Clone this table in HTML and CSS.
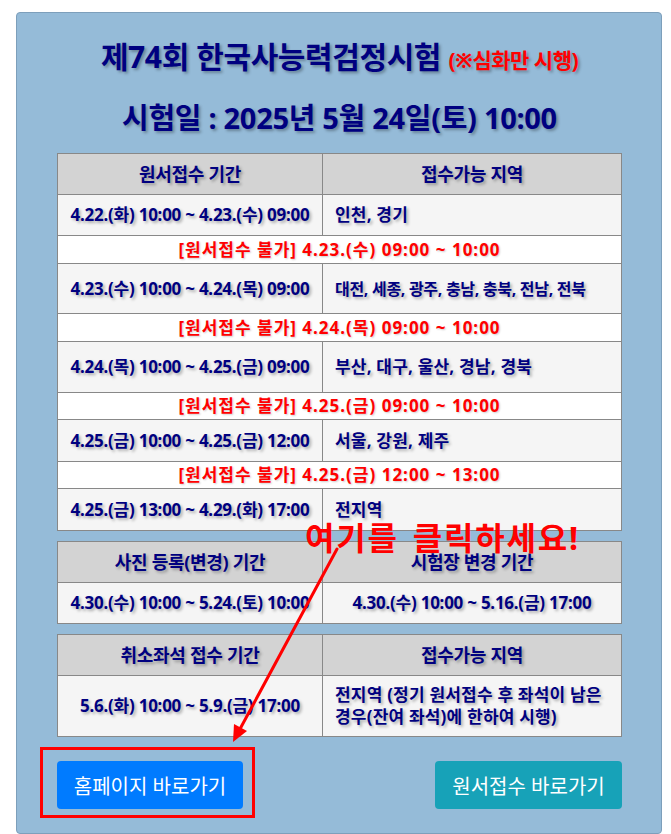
FILE: index.html
```html
<!DOCTYPE html>
<html lang="ko">
<head>
<meta charset="utf-8">
<title>제74회 한국사능력검정시험</title>
<link rel="stylesheet" href="styles.css">
</head>
<body>
<div class="panel">
  <h1 class="title">제74회 한국사능력검정시험 <span class="note">(※심화만 시행)</span></h1>
  <h2 class="exam-date">시험일 : 2025년 5월 24일(토) 10:00</h2>

  <div class="sheet">
    <div class="cell head">원서접수 기간</div>
    <div class="cell head">접수가능 지역</div>

    <div class="cell period r41">4.22.(화) 10:00 ~ 4.23.(수) 09:00</div>
    <div class="cell region r41">인천, 경기</div>
    <div class="cell closed c28">[원서접수 불가] 4.23.(수) 09:00 ~ 10:00</div>

    <div class="cell period r50">4.23.(수) 10:00 ~ 4.24.(목) 09:00</div>
    <div class="cell region small r50">대전, 세종, 광주, 충남, 충북, 전남, 전북</div>
    <div class="cell closed c28">[원서접수 불가] 4.24.(목) 09:00 ~ 10:00</div>

    <div class="cell period r51">4.24.(목) 10:00 ~ 4.25.(금) 09:00</div>
    <div class="cell region r51">부산, 대구, 울산, 경남, 경북</div>
    <div class="cell closed c27">[원서접수 불가] 4.25.(금) 09:00 ~ 10:00</div>

    <div class="cell period r42">4.25.(금) 10:00 ~ 4.25.(금) 12:00</div>
    <div class="cell region r42">서울, 강원, 제주</div>
    <div class="cell closed c27">[원서접수 불가] 4.25.(금) 12:00 ~ 13:00</div>

    <div class="cell period r42">4.25.(금) 13:00 ~ 4.29.(화) 17:00</div>
    <div class="cell region r42">전지역</div>
  </div>

  <div class="sheet gap">
    <div class="cell head">사진 등록(변경) 기간</div>
    <div class="cell head">시험장 변경 기간</div>
    <div class="cell period r41">4.30.(수) 10:00 ~ 5.24.(토) 10:00</div>
    <div class="cell period r41">4.30.(수) 10:00 ~ 5.16.(금) 17:00</div>
  </div>

  <div class="sheet gap">
    <div class="cell head">취소좌석 접수 기간</div>
    <div class="cell head">접수가능 지역</div>
    <div class="cell period r61">5.6.(화) 10:00 ~ 5.9.(금) 17:00</div>
    <div class="cell region r61 wrap">전지역 (정기 원서접수 후 좌석이 남은 경우(잔여 좌석)에 한하여 시행)</div>
  </div>

  <div class="actions">
    <div class="btn-wrap">
      <a class="btn btn-home" href="#">홈페이지 바로가기</a>
      <span class="highlight"></span>
    </div>
    <a class="btn btn-apply" href="#">원서접수 바로가기</a>
  </div>

  <div class="callout">여기를 클릭하세요!</div>
  <svg class="arrow" width="644" height="821" viewBox="0 0 644 821">
    <line x1="320" y1="536" x2="223" y2="716" stroke="#ff0000" stroke-width="3" stroke-linecap="round"/>
    <polygon points="216,729 230,718 217,711" fill="#ff0000"/>
  </svg>
</div>
</body>
</html>
```

FILE: styles.css
```css
* { box-sizing: border-box; }

html, body {
  margin: 0;
  padding: 0;
  background: #ffffff;
}

body {
  padding: 12px 0 0 16px;
  font-family: "Noto Sans", "Noto Sans CJK KR", sans-serif;
}

.panel {
  position: relative;
  width: 646px;
  background: #95bbd8;
  border: 1px solid #7d9fbb;
  border-radius: 4px;
  padding: 24px 39px 24px 40px;
}

.title {
  margin: 0;
  font-size: 30px;
  line-height: 40px;
  font-weight: 700;
  color: #000080;
  text-align: center;
  letter-spacing: -0.4px;
  text-shadow: 2px 2px 3px rgba(0, 0, 0, 0.3);
}

.note {
  font-size: 21px;
  color: #ff0000;
  letter-spacing: -0.5px;
}

.exam-date {
  margin: 18px 0 0;
  font-size: 29px;
  line-height: 40px;
  font-weight: 700;
  color: #000080;
  text-align: center;
  letter-spacing: -0.3px;
  text-shadow: 2px 2px 3px rgba(0, 0, 0, 0.3);
}

.sheet {
  margin-top: 15px;
  display: grid;
  grid-template-columns: 265px 1fr;
  border-top: 1px solid #888888;
  border-left: 1px solid #888888;
}

.sheet.gap { margin-top: 10px; }

.cell {
  border-right: 1px solid #888888;
  border-bottom: 1px solid #888888;
  background: #f5f5f5;
  color: #000080;
  font-size: 17px;
  font-weight: 700;
  letter-spacing: -0.25px;
  line-height: 22px;
  display: flex;
  align-items: center;
  justify-content: center;
  text-shadow: 2px 2px 3px rgba(0, 0, 0, 0.3);
  padding: 0 10px;
  word-break: keep-all;
}

.cell.head {
  background: #d3d3d3;
  height: 41px;
  font-size: 18px;
  letter-spacing: -0.3px;
}

.cell.region {
  justify-content: flex-start;
  padding-left: 12px;
  letter-spacing: 0.2px;
}

.cell.region.small {
  font-size: 16px;
  letter-spacing: -0.3px;
}

.cell.wrap {
  padding-right: 8px;
}

.cell.closed {
  grid-column: 1 / 3;
  background: #ffffff;
  color: #ff0000;
  font-size: 17px;
  font-weight: 700;
  letter-spacing: 1px;
  text-shadow: 1px 1px 2px rgba(0, 0, 0, 0.2);
}

.r41 { height: 41px; }
.r42 { height: 42px; }
.r50 { height: 50px; }
.r51 { height: 51px; }
.r61 { height: 61px; }
.c27 { height: 27px; }
.c28 { height: 28px; }

.actions {
  margin-top: 24px;
  display: flex;
  justify-content: space-between;
  align-items: center;
}

.btn-wrap {
  position: relative;
}

.btn {
  display: flex;
  align-items: center;
  justify-content: center;
  height: 48px;
  border-radius: 4px;
  color: #ffffff;
  text-decoration: none;
  font-size: 20px;
  font-weight: 400;
}

.btn-home {
  width: 186px;
  background: #007bff;
}

.btn-apply {
  width: 187px;
  background: #17a2b8;
}

.highlight {
  position: absolute;
  left: -17px;
  top: -14px;
  width: 215px;
  height: 71px;
  border: 3px solid #ff0000;
}

.callout {
  position: absolute;
  left: 288px;
  top: 507px;
  font-size: 32px;
  line-height: 36px;
  font-weight: 700;
  color: #ff0000;
  letter-spacing: 1.8px;
  word-spacing: 4px;
  white-space: nowrap;
}

.arrow {
  position: absolute;
  left: 0;
  top: 0;
  pointer-events: none;
}
```
